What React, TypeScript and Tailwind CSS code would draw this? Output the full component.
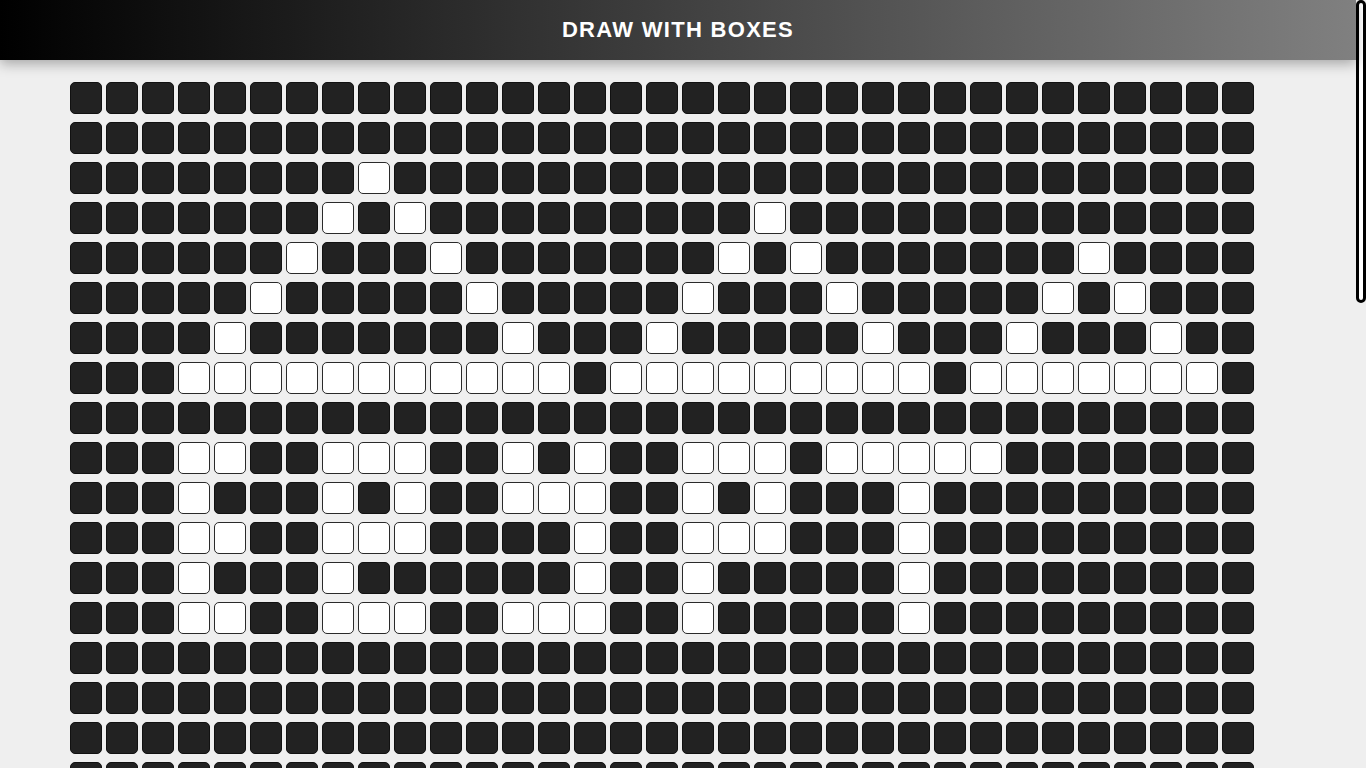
import React from "react";

const COLS = 33;
const ROWS = 46;

const range = (a: number, b: number) => Array.from({ length: b - a + 1 }, (_, i) => a + i);

// white boxes, keyed by row
const whiteCells: Record<number, number[]> = {
  2: [8],
  3: [7, 9, 19],
  4: [6, 10, 18, 20, 28],
  5: [5, 11, 17, 21, 27, 29],
  6: [4, 12, 16, 22, 26, 30],
  7: [...range(3, 13), ...range(15, 23), ...range(25, 31)],
  9: [3, 4, 7, 8, 9, 12, 14, 17, 18, 19, 21, 22, 23, 24, 25],
  10: [3, 7, 9, 12, 13, 14, 17, 19, 23],
  11: [3, 4, 7, 8, 9, 14, 17, 18, 19, 23],
  12: [3, 7, 14, 17, 23],
  13: [3, 4, 7, 8, 9, 12, 13, 14, 17, 23],
};

const isWhite = (index: number) => {
  const row = Math.floor(index / COLS);
  const col = index % COLS;
  return (whiteCells[row] || []).includes(col);
};

const Box: React.FC<{ on: boolean }> = ({ on }) => (
  <div
    className={`w-8 h-8 mx-[2px] my-1 rounded-[5px] border ${
      on ? "bg-white border-[#2a2a2a]" : "bg-[#222222] border-[#111111]"
    }`}
  />
);

const App: React.FC = () => {
  const boxes = Array.from({ length: COLS * ROWS }, (_, i) => i);

  return (
    <div className="flex bg-[#efefef] font-['Liberation_Sans',Arial,sans-serif]">
      <div className="flex-1 min-w-0">
        <header className="sticky top-0 z-10 h-[60px] pb-[2px] flex items-center justify-center bg-[linear-gradient(to_right,#000000,#808080)] shadow-[0_4px_12px_rgba(0,0,0,0.3)]">
          <h1 className="text-white text-[22px] font-bold tracking-[1.3px]">DRAW WITH BOXES</h1>
        </header>

        <main className="w-[90%] mx-auto pt-[18px] pb-8 flex flex-wrap">
          {boxes.map((i) => (
            <Box key={i} on={isWhite(i)} />
          ))}
        </main>
      </div>

      {/* scrollbar */}
      <aside className="w-[10px] h-screen sticky top-0 shrink-0">
        <div className="h-[303px] rounded-full border-[3px] border-black bg-white" />
      </aside>
    </div>
  );
};

export default App;
